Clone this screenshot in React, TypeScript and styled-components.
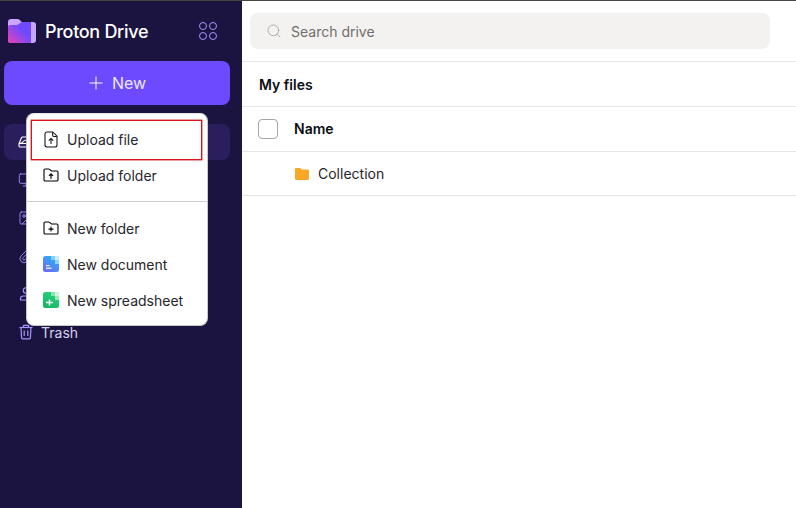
import React from "react";
import styled, { createGlobalStyle } from "styled-components";
import { Image, Monitor, Paperclip, Search } from "lucide-react";

const Global = createGlobalStyle`
  html, body { margin: 0; padding: 0; background: #fff; }
  * { box-sizing: border-box; }
  body { font-family: Inter, "Liberation Sans", sans-serif; color: #0c0c14; }
`;

const Page = styled.div`
  display: grid;
  grid-template-columns: 242px 1fr;
  width: 796px;
  height: 508px;
  overflow: hidden;
  border-top: 1px solid #45453f;
`;

const Sidebar = styled.aside`
  position: relative;
  background: #1b1340;
  display: flex;
  flex-direction: column;
  padding: 0 12px 0 4px;
`;

const Brand = styled.div`
  display: flex;
  align-items: center;
  height: 60px;
  padding: 0 4px;
  width: 226px;
`;

const Wordmark = styled.span`
  margin-left: 9px;
  font-size: 18px;
  font-weight: 500;
  letter-spacing: -0.3px;
  color: #fff;
  flex: 1;
`;

const Apps = styled.svg`
  width: 18px;
  height: 18px;
  margin-right: 9px;
  fill: none;
  stroke: #a796ff;
  stroke-width: 1;
`;

const NewButton = styled.button`
  width: 226px;
  height: 44px;
  border: 0;
  border-radius: 8px;
  background: #6d4aff;
  color: #ece8ff;
  font: 400 16px Inter, sans-serif;
  display: flex;
  align-items: center;
  justify-content: center;
  gap: 8px;
`;

const Nav = styled.nav`
  display: flex;
  flex-direction: column;
  gap: 2px;
  margin-top: 19px;
  width: 226px;
`;

const NavRow = styled.div<{ $active?: boolean }>`
  height: 36px;
  border-radius: 8px;
  display: flex;
  align-items: center;
  gap: 7px;
  padding: 0 0 0 14px;
  font-size: 14px;
  color: ${(p) => (p.$active ? "#fff" : "#d6d2ea")};
  background: ${(p) => (p.$active ? "#2b1e5c" : "transparent")};
  svg { flex: none; color: ${(p) => (p.$active ? "#fff" : "#a796ff")}; }
`;

const Menu = styled.div`
  position: absolute;
  left: 26px;
  top: 112px;
  width: 182px;
  height: 213px;
  background: #fff;
  border-radius: 8px;
  border: 1px solid #c9c7c4;
  border-top-color: #e6e4e2;
  padding: 7px 0 0;
  display: flex;
  flex-direction: column;
`;

const MenuItem = styled.div<{ $marked?: boolean }>`
  position: relative;
  height: 36px;
  flex: none;
  display: flex;
  align-items: center;
  gap: 8px;
  padding-left: 16px;
  font-size: 14px;
  color: #26262c;
  ${(p) =>
    p.$marked &&
    `&::after {
      content: "";
      position: absolute;
      left: 4px;
      right: 5px;
      top: -1px;
      bottom: -3px;
      border: 1px solid #d8141c;
      box-shadow: 0 0 0 .4px #d8141c;
    }`}
`;

const Divider = styled.hr`
  margin: 8px 0;
  border: 0;
  border-top: 1px solid #d0cecb;
  width: 100%;
`;

const Main = styled.main`
  display: flex;
  flex-direction: column;
  min-width: 0;
`;

const TopBar = styled.header`
  height: 61px;
  flex: none;
  border-bottom: 1px solid #e8e6e4;
  padding: 12px 26px 0 8px;
`;

const SearchBox = styled.div`
  height: 36px;
  background: #f4f2f0;
  border-radius: 8px;
  display: flex;
  align-items: center;
  gap: 9px;
  padding-left: 16px;
  font-size: 14px;
  color: #706d6b;
  svg { color: #9a9793; }
`;

const Crumb = styled.div`
  height: 45px;
  flex: none;
  display: flex;
  align-items: center;
  padding-left: 17px;
  border-bottom: 1px solid #e8e6e4;
  font-size: 14px;
  font-weight: 600;
`;

const HeaderRow = styled.div`
  height: 45px;
  flex: none;
  display: flex;
  align-items: center;
  padding-left: 16px;
  border-bottom: 1px solid #e8e6e4;
  font-size: 14px;
  font-weight: 600;
`;

const ColumnName = styled.span`
  margin-bottom: 2px;
`;

const Check = styled.span`
  width: 20px;
  height: 20px;
  border: 1px solid #a8a6a3;
  border-radius: 4px;
  margin-right: 16px;
  background: #fff;
`;

const FileRow = styled.div`
  height: 44px;
  flex: none;
  display: flex;
  align-items: center;
  padding-left: 53px;
  gap: 9px;
  border-bottom: 1px solid #e8e6e4;
  font-size: 14px;
  color: #26262c;
`;

const DriveIcon = () => (
  <svg width="16" height="16" viewBox="0 0 16 16" fill="none" stroke="currentColor" strokeWidth="1.1">
    <path d="M1 9.500 3.600 3.600C3.800 3.200 4.100 3 4.600 3h7.800c.5 0 .8.2 1 .6L15 9.500v2.200c0 .8-.6 1.300-1.300 1.300H2.300C1.600 13 1 12.500 1 11.700V9.500Z" />
    <path d="M1 9.500c2-.6 3-.2 4.200-2C6 6.300 7.400 6 9 6" />
    <path d="M1 9.500h14" />
  </svg>
);

const UserIcon = () => (
  <svg width="16" height="16" viewBox="0 0 16 16" fill="none" stroke="currentColor" strokeWidth="1.1">
    <circle cx="8" cy="4.500" r="2.700" />
    <path d="M2.500 14v-1.300c0-1.500 1.200-2.700 2.700-2.700h5.600c1.500 0 2.700 1.200 2.700 2.700V14H2.500Z" />
  </svg>
);

const TrashIcon = () => (
  <svg width="16" height="16" viewBox="0 0 16 16" fill="none" stroke="currentColor" strokeWidth="1.2">
    <path d="M1.500 3.500h13" />
    <path d="M5.500 3.500V1.800c0-.3.2-.5.5-.5h4c.3 0 .5.2.5.5v1.700" />
    <path d="M3 3.500l.6 10.200c0 .6.500 1.100 1.100 1.100h6.600c.6 0 1.100-.5 1.100-1.100L13 3.500" />
    <path d="M6.200 6.500v5.500M9.800 6.500v5.500" />
  </svg>
);

const FileUp = () => (
  <svg width="16" height="17" viewBox="0 0 16 17" fill="none" stroke="#111" strokeWidth="1.05">
    <path d="M9.800 1H4C2.900 1 2 1.900 2 3v11c0 1.100.9 2 2 2h8c1.100 0 2-.9 2-2V5.200L9.800 1Z" />
    <path d="M9.600 1.200V4c0 .8.6 1.400 1.400 1.400h2.800" />
    <path d="M8 13V7.600M5.800 9.700 8 7.500l2.200 2.200" />
  </svg>
);

const FolderBase = "M1 3.200C1 2.500 1.500 2 2.200 2h3.400c.4 0 .7.2 1 .4L8.400 4h5.300c.7 0 1.300.6 1.300 1.300v7.400c0 .7-.6 1.300-1.300 1.300H2.300C1.600 14 1 13.400 1 12.700V3.200Z";

const FolderUp = () => (
  <svg width="16" height="16" viewBox="0 0 16 16" fill="none" stroke="#000" strokeWidth="1.1">
    <path d={FolderBase} />
    <path d="M8 12V7M6 8.900 8 6.900l2 2" />
  </svg>
);

const FolderPlus = () => (
  <svg width="16" height="16" viewBox="0 0 16 16" fill="none" stroke="#000" strokeWidth="1.1">
    <path d={FolderBase} />
    <path d="M8 6.600v5M5.500 9.100h5" />
  </svg>
);

const DocIcon = () => (
  <svg width="16" height="16" viewBox="0 0 16 16">
    <defs>
      <linearGradient id="doc" x1="0.8" y1="0" x2="0.2" y2="1">
        <stop offset="0" stopColor="#27b4f2" />
        <stop offset="1" stopColor="#6a6cf8" />
      </linearGradient>
    </defs>
    <rect width="16" height="16" rx="2.500" fill="url(#doc)" />
    <path d="M12 0h1.500A2.500 2.500 0 0 1 16 2.500V4h-4V0Z" fill="#cfeefb" />
    <rect x="8" y="0" width="4" height="4" fill="#7fd0f7" />
    <rect x="12" y="4" width="4" height="4" fill="#8ed6f8" />
    <rect x="3" y="9" width="3.600" height="1.200" fill="#fff" opacity=".9" />
    <rect x="3" y="11.600" width="5.600" height="1.200" fill="#fff" />
  </svg>
);

const SheetIcon = () => (
  <svg width="16" height="16" viewBox="0 0 16 16">
    <defs>
      <linearGradient id="sheet" x1="0.8" y1="0" x2="0.2" y2="1">
        <stop offset="0" stopColor="#2bd47c" />
        <stop offset="1" stopColor="#12b564" />
      </linearGradient>
    </defs>
    <rect width="16" height="16" rx="2.500" fill="url(#sheet)" />
    <path d="M12 0h1.500A2.500 2.500 0 0 1 16 2.500V4h-4V0Z" fill="#d5f5e1" />
    <rect x="8" y="0" width="4" height="4" fill="#86e6ae" />
    <rect x="12" y="4" width="4" height="4" fill="#95ebb9" />
    <path d="M6.500 7.500v6M3 10.500h7" stroke="#fff" strokeWidth="1.400" />
  </svg>
);

const Logo = () => (
  <svg width="28" height="24" viewBox="0 0 28 24" style={{ flex: "none" }}>
    <defs>
      <linearGradient id="lg" x1="0" y1="1" x2="0.85" y2="0.2">
        <stop offset="0" stopColor="#ef3fb4" />
        <stop offset="0.75" stopColor="#6d4aff" />
      </linearGradient>
    </defs>
    <path d="M0 3a3 3 0 0 1 3-3h6.500c.8 0 1.400.3 2 .8L13.800 3H25a3 3 0 0 1 3 3v15a3 3 0 0 1-3 3H3a3 3 0 0 1-3-3V3Z" fill="#c9a6fb" />
    <path d="M0 8c0-1 .8-2 2-2h6.600c.8 0 1.300-.2 1.900-.8L13.800 3H23v21H3a3 3 0 0 1-3-3V8Z" fill="url(#lg)" />
  </svg>
);

export default function App() {
  return (
    <>
      <Global />
      <Page>
        <Sidebar>
          <Brand>
            <Logo />
            <Wordmark>Proton Drive</Wordmark>
            <Apps viewBox="0 0 18 18">
              <circle cx="4" cy="4" r="3.500" />
              <circle cx="14" cy="4" r="3.500" />
              <circle cx="4" cy="14" r="3.500" />
              <circle cx="14" cy="14" r="3.500" />
            </Apps>
          </Brand>
          <NewButton>
            <svg width="16" height="16" viewBox="0 0 16 16" stroke="#fff" strokeWidth="1">
              <path d="M8 1.500v13M1.500 8h13" />
            </svg>
            New
          </NewButton>
          <Nav>
            <NavRow $active><DriveIcon /></NavRow>
            <NavRow><Monitor size={16} strokeWidth={1.3} /></NavRow>
            <NavRow><Image size={16} strokeWidth={1.3} /></NavRow>
            <NavRow><Paperclip size={16} strokeWidth={1.3} /></NavRow>
            <NavRow><UserIcon /></NavRow>
            <NavRow><TrashIcon />Trash</NavRow>
          </Nav>
          <Menu>
            <MenuItem $marked><FileUp />Upload file</MenuItem>
            <MenuItem><FolderUp />Upload folder</MenuItem>
            <Divider />
            <MenuItem><FolderPlus />New folder</MenuItem>
            <MenuItem><DocIcon />New document</MenuItem>
            <MenuItem><SheetIcon />New spreadsheet</MenuItem>
          </Menu>
        </Sidebar>
        <Main>
          <TopBar>
            <SearchBox>
              <Search size={16} strokeWidth={1.1} />
              Search drive
            </SearchBox>
          </TopBar>
          <Crumb>My files</Crumb>
          <HeaderRow><Check /><ColumnName>Name</ColumnName></HeaderRow>
          <FileRow>
            <svg width="14" height="12" viewBox="0 0 14 12" fill="#f9a825">
              <path d="M0 1.200C0 .5.5 0 1.200 0h3.400c.3 0 .6.1.8.3L6.800 1.600h6C13.500 1.600 14 2.100 14 2.800v8c0 .7-.5 1.200-1.200 1.200H1.200C.5 12 0 11.500 0 10.800V1.200Z" />
            </svg>
            Collection
          </FileRow>
        </Main>
      </Page>
    </>
  );
}
